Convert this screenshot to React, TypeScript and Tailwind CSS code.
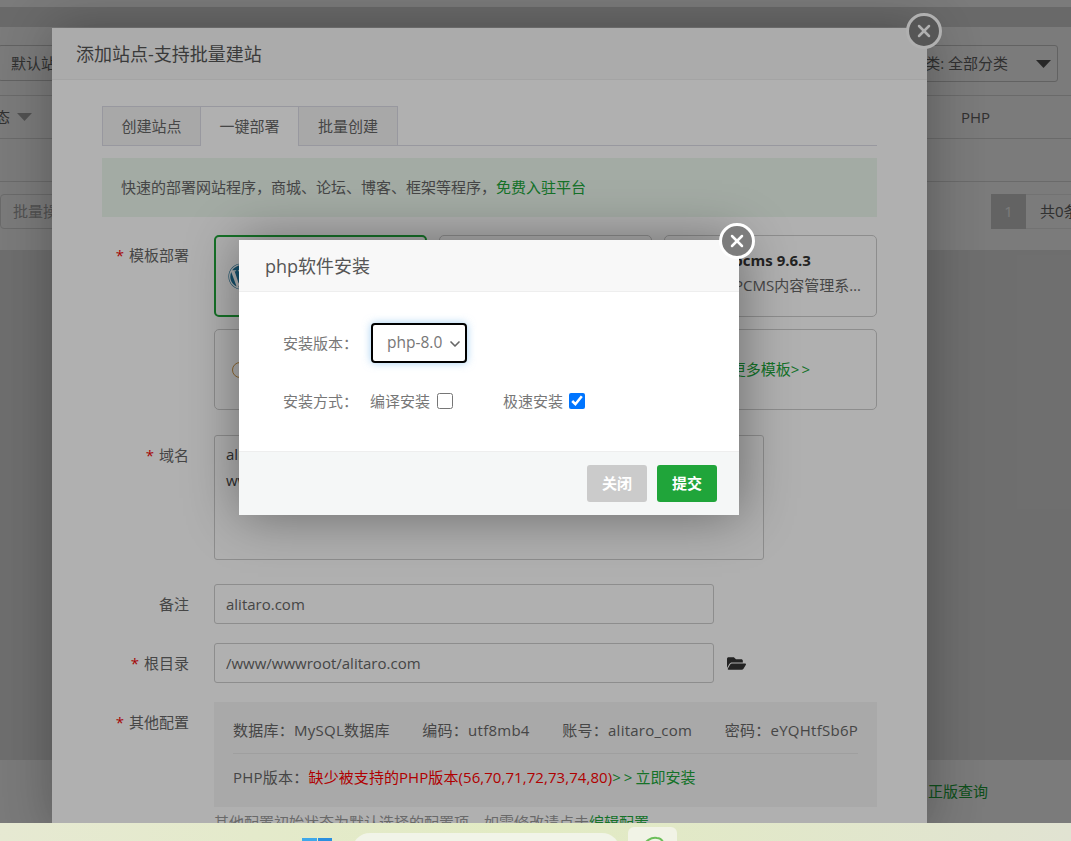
import { ChevronDown, X } from 'lucide-react';
import { FaFolderOpen, FaWordpress } from 'react-icons/fa';

function CloseBtn({ className }: { className: string }) {
  return (
    <button className={`absolute flex h-9 w-9 items-center justify-center rounded-full border-[3px] border-white bg-[#7d7d7d] text-white ${className}`}>
      <X size={20} strokeWidth={3} />
    </button>
  );
}

function Caret({ className }: { className: string }) {
  return (
    <svg width="15" height="8" viewBox="0 0 15 8" className={className}>
      <path d="M0 0h15L7.500 8z" fill="currentColor" />
    </svg>
  );
}

function Field({ label, required, children }: { label: string; required?: boolean; children: React.ReactNode }) {
  return (
    <div className="flex gap-[25px]">
      <label className="w-[87px] shrink-0 pt-[9px] text-right leading-[22px] text-[#666]">
        {required && <span className="mr-[5px] text-[#ef0808]">*</span>}
        {label}
      </label>
      <div className="min-w-0 flex-1">{children}</div>
    </div>
  );
}

function AddSiteModal() {
  return (
    <div className="absolute left-[52px] top-[28px] w-[875px] bg-white shadow-[1px_1px_50px_rgba(0,0,0,0.3)]">
      <div className="flex h-[52px] items-center border-b border-[#eee] bg-[#f8f8f8] pl-[24px] pt-[1px] text-[18px] text-[#555]">
        添加站点-支持批量建站
      </div>
      <CloseBtn className="-right-[15px] -top-[15px]" />

      <div className="px-[50px] pt-[26px]">
        <div className="flex h-[40px] border-b border-[#dcdce6]">
          <div className="flex h-[40px] w-[99px] items-center justify-center border border-[#dcdce6] bg-[#f4f4f4] text-[#666]">创建站点</div>
          <div className="flex h-[40px] w-[99px] -ml-px items-center justify-center border border-b-0 border-[#dcdce6] bg-white text-[#666]">一键部署</div>
          <div className="flex h-[40px] w-[100px] -ml-px items-center justify-center border border-[#dcdce6] bg-[#f4f4f4] text-[#666]">批量创建</div>
        </div>

        <div className="mt-[12px] flex h-[59px] items-center bg-[#ecf8ee] pl-[19px] text-[#666]">
          快速的部署网站程序，商城、论坛、博客、框架等程序，
          <span className="text-[#20a53a]">免费入驻平台</span>
        </div>

        <div className="mt-[18px]">
          <Field label="模板部署" required>
            <div className="grid grid-cols-3 gap-x-[12px]">
              <div className="flex h-[82px] items-center rounded-[5px] border-2 border-[#20a53a] pl-[12px]">
                <FaWordpress size={27} className="text-[#21759b]" />
              </div>
              <div className="h-[82px] rounded-[5px] border border-[#ccc]" />
              <div className="flex h-[82px] flex-col justify-center gap-[3px] rounded-[5px] border border-[#ccc] pb-[8px] pl-[49px] leading-[22px]">
                <div className="font-bold text-[#333]">phpcms 9.6.3</div>
                <div className="w-[150px] truncate text-[#666]">PHPCMS内容管理系统模板</div>
              </div>
            </div>
            <div className="mt-[12px] flex h-[81px] items-center justify-between rounded-[5px] border border-[#ccc] pl-[17px] pr-[64px]">
              <div className="h-[16px] w-[32px] rounded-full border-[1.5px] border-[#d09a4a]" />
              <span className="text-[#20a53a]">
                更多模板<span className="tracking-[2px]">&gt;&gt;</span>
              </span>
            </div>
          </Field>
        </div>

        <div className="mt-[25px]">
          <Field label="域名" required>
            <textarea
              readOnly
              defaultValue={'alitaro.com\nwww.alitaro.com'}
              className="block h-[125px] w-[550px] resize-none rounded-[3px] border border-[#ccc] px-[11px] py-[5px] leading-[26px] text-[#444] outline-none"
            />
          </Field>
        </div>

        <div className="mt-[24px]">
          <Field label="备注">
            <input readOnly value="alitaro.com" className="block h-[40px] w-[500px] rounded-[3px] border border-[#ccc] px-[11px] text-[#666] outline-none" />
          </Field>
        </div>

        <div className="mt-[19px]">
          <Field label="根目录" required>
            <div className="flex items-center gap-[13px]">
              <input readOnly value="/www/wwwroot/alitaro.com" className="block h-[40px] w-[500px] rounded-[3px] border border-[#ccc] px-[11px] text-[#666] outline-none" />
              <FaFolderOpen size={19} className="text-[#333]" />
            </div>
          </Field>
        </div>

        <div className="mt-[19px]">
          <Field label="其他配置" required>
            <div className="h-[105px] bg-[#f5f5f5] px-[19px]">
              <div className="flex h-[52px] items-center justify-between border-b border-[#e6e6e6] pt-[5px] tracking-[0.25px] text-[#666]">
                <span>数据库：MySQL数据库</span>
                <span>编码：utf8mb4</span>
                <span>账号：alitaro_com</span>
                <span>密码：eYQHtfSb6P</span>
              </div>
              <div className="flex h-[47px] items-center text-[#666]">
                <span className="tracking-[0.25px]">PHP版本：</span>
                <span className="tracking-[0.07px] text-[#f00]">缺少被支持的PHP版本(56,70,71,72,73,74,80)</span>
                <span className="text-[#20a53a]">
                  <span className="tracking-[3px]">&gt;&gt;</span>立即安装
                </span>
              </div>
            </div>
            <div className="mt-[6px] leading-[18px] text-[#999]">
              其他配置初始状态为默认选择的配置项，如需修改请点击<span className="text-[#20a53a]">编辑配置</span>
            </div>
          </Field>
        </div>
      </div>
    </div>
  );
}

function InstallDialog() {
  return (
    <div className="absolute left-[239px] top-[240px] w-[500px] bg-white shadow-[1px_1px_50px_rgba(0,0,0,0.4)]">
      <div className="flex h-[52px] items-center border-b border-[#eee] bg-[#f8f8f8] pl-[26px] pt-[2px] text-[18px] text-[#555]">
        php软件安装
      </div>
      <CloseBtn className="-right-[16px] -top-[17px]" />

      <div className="h-[159px] pl-[44px] pt-[31px] text-[#777]">
        <div className="flex h-[40px] items-center">
          <span className="w-[88px]">安装版本：</span>
          <div className="relative">
            <select className="block h-[40px] w-[96px] appearance-none rounded-[4px] border-2 border-black bg-white pl-[14px] text-[15.5px] text-[#777] shadow-[0_0_8px_rgba(102,175,233,0.6)] outline-none">
              <option>php-8.0</option>
            </select>
            <ChevronDown size={16} strokeWidth={2.5} className="pointer-events-none absolute right-[4px] top-[13px] text-[#666]" />
          </div>
        </div>
        <div className="mt-[28px] flex h-[20px] items-center">
          <span className="w-[87px]">安装方式：</span>
          <span>编译安装</span>
          <input type="checkbox" className="ml-[7px] h-[16px] w-[16px]" />
          <span className="ml-[50px]">极速安装</span>
          <input type="checkbox" defaultChecked className="ml-[6px] h-[16px] w-[16px]" />
        </div>
      </div>

      <div className="flex h-[64px] justify-end gap-[10px] border-t border-[#eee] bg-[#f5f7f7] pr-[22px] pt-[13px]">
        <button className="h-[37px] w-[60px] rounded-[3px] bg-[#cbcbcb] pb-[1px] text-[15px] font-bold text-white">关闭</button>
        <button className="h-[37px] w-[60px] rounded-[3px] bg-[#20a53a] pb-[1px] text-[15px] font-bold text-white">提交</button>
      </div>
    </div>
  );
}

export default function App() {
  return (
    <div className="flex h-[841px] flex-col overflow-hidden font-['Open_Sans','Noto_Sans_CJK_SC',sans-serif] text-[15px]">
      <div className="relative flex h-[823px] flex-col overflow-hidden bg-[#e6e6e6]">
        <div className="h-[7px] bg-white" />
        <div className="h-[20px] bg-[#dcdcdc]" />

        {/* page behind the dialogs */}
        <div className="h-[223px] bg-white text-[#666]">
          <div className="flex h-[68px] justify-between pt-[18px]">
            <div className="flex h-[36px] w-[200px] -ml-[2px] items-center rounded-[3px] border border-[#ccc] pl-[12px]">默认站点</div>
            <div className="mr-[13px] flex h-[37px] w-[190px] items-center justify-end rounded-[3px] border border-[#ccc] pr-[6px]">
              分类: 全部分类
              <Caret className="ml-[28px] text-[#555]" />
            </div>
          </div>
          <div className="flex h-[43px] items-center border-t border-[#ddd]">
            <span className="-ml-[20px]">状态</span>
            <Caret className="ml-[7px] text-[#aaa]" />
            <span className="ml-auto mr-[81px]">PHP</span>
          </div>
          <div className="h-[43px] border-t border-[#ddd]" />
          <div className="flex h-[69px] justify-between border-t border-[#ddd] pt-[12px]">
            <div className="flex h-[35px] w-[160px] items-center rounded-[4px] border border-[#ddd] pl-[12px] text-[#aaa]">批量操作</div>
            <div className="flex h-[35px] items-center">
              <div className="flex h-[35px] w-[35px] items-center justify-center bg-[#cfcfcf] text-[#fff]">1</div>
              <div className="flex h-[35px] w-[45px] items-center overflow-hidden whitespace-nowrap border-y border-[#eee] pl-[14px]">共0条</div>
            </div>
          </div>
        </div>
        <div className="flex-1" />
        <div className="flex h-[63px] justify-end bg-white pr-[83px] pt-[20px] text-[#20a53a]">正版查询</div>

        <div className="absolute inset-0 bg-black/30" />
        <AddSiteModal />
        <div className="absolute inset-0 bg-black/[0.31]" />
        <InstallDialog />
      </div>

      {/* windows taskbar */}
      <div className="flex h-[18px] overflow-hidden bg-gradient-to-r from-[#e6e9d2] via-[#e2ebc3] to-[#e1e3d2]">
        <div className="ml-[302px] mt-[15px] grid h-[20px] w-[30px] shrink-0 grid-cols-2 gap-[1px]">
          <div className="h-[20px] bg-[#3fa8ea]" />
          <div className="h-[20px] bg-[#2a8fdf]" />
        </div>
        <div className="ml-[20px] mt-[10px] h-[30px] w-[268px] shrink-0 rounded-t-[18px] bg-[#f1f4e8]" />
        <div className="ml-[8px] mt-[4px] flex h-[30px] w-[49px] shrink-0 justify-center rounded-t-[6px] bg-[#f1f3e6] pt-[8px]">
          <svg width="24" height="12" viewBox="0 0 24 12" fill="none" stroke="#6cbf5a" strokeWidth="2">
            <path d="M2 12c2-6 8-10 14-9 3 0 5 2 6 4" />
          </svg>
        </div>
      </div>
    </div>
  );
}
